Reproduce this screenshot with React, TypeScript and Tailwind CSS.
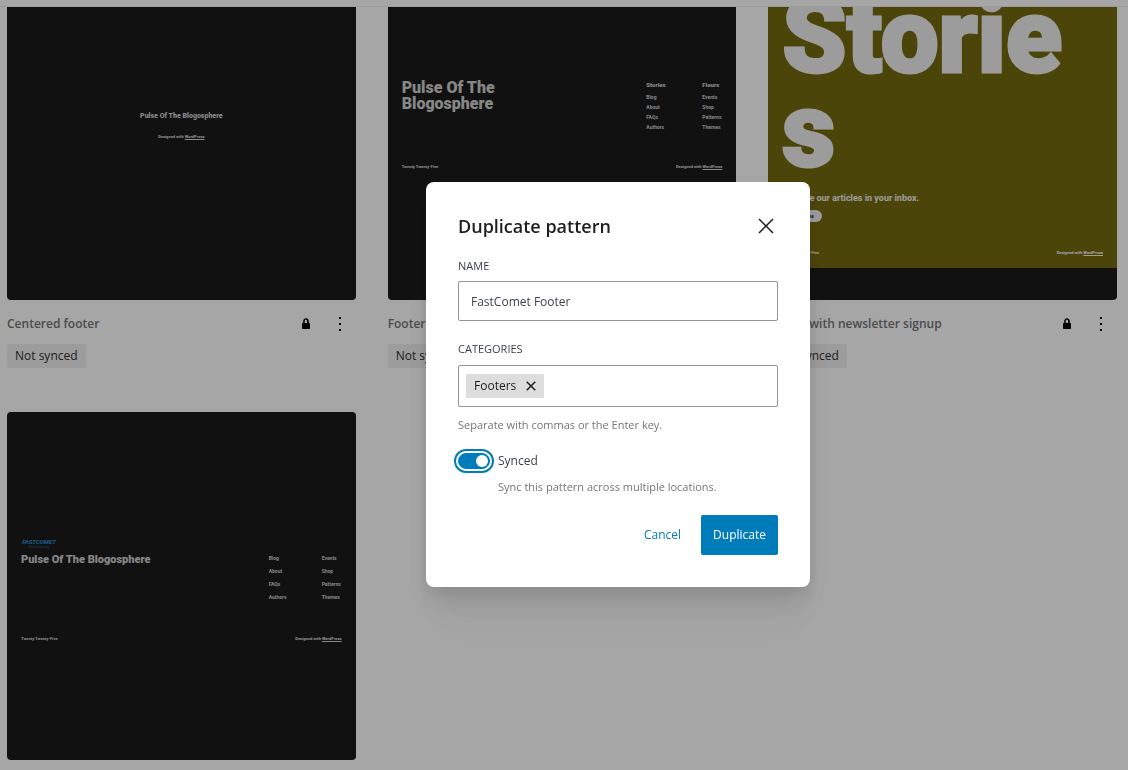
import { useState, type ReactNode } from "react";

const LINKS_LEFT = ["Blog", "About", "FAQs", "Authors"];
const LINKS_RIGHT = ["Events", "Shop", "Patterns", "Themes"];

const ICONS = {
  close:
    "m13.06 12 6.47-6.47-1.06-1.06L12 10.94 5.53 4.47 4.47 5.53 10.94 12l-6.47 6.47 1.06 1.06L12 13.06l6.47 6.47 1.06-1.06L13.06 12Z",
  closeSmall:
    "M12 13.06l3.712 3.713 1.061-1.06L13.061 12l3.712-3.712-1.06-1.06L12 10.938 8.288 7.227l-1.061 1.06L10.939 12l-3.712 3.712 1.06 1.061L12 13.061z",
  more: "M13 19h-2v-2h2v2zm0-6h-2v-2h2v2zm0-6h-2V5h2v2z",
  lock: "M15 11h-.2V9c0-1.5-1.2-2.8-2.8-2.8S9.2 7.5 9.2 9v2H9c-.6 0-1 .4-1 1v4c0 .6.4 1 1 1h6c.6 0 1-.4 1-1v-4c0-.6-.4-1-1-1zm-1.8 0h-2.5V9c0-.7.6-1.2 1.2-1.2s1.2.6 1.2 1.2v2z",
};

function Icon({ d }: { d: string }) {
  return (
    <svg
      viewBox="0 0 24 24"
      width="24"
      height="24"
      fill="currentColor"
      aria-hidden="true"
      className="shrink-0"
    >
      <path d={d} />
    </svg>
  );
}

function DesignedWith() {
  return (
    <span>
      Designed with <span className="underline">WordPress</span>
    </span>
  );
}

function Credits({ className }: { className: string }) {
  return (
    <div className={`flex justify-between text-[4px] leading-[6px] font-black ${className}`}>
      <span>Twenty Twenty-Five</span>
      <DesignedWith />
    </div>
  );
}

function LinkColumn({
  title,
  links,
  className,
}: {
  title?: string;
  links: string[];
  className: string;
}) {
  return (
    <div>
      {title && <p className="mb-0.5 text-[6px] leading-[10px] font-black">{title}</p>}
      <ul className={`text-[5px] font-bold ${className}`}>
        {links.map((link) => (
          <li key={link}>{link}</li>
        ))}
      </ul>
    </div>
  );
}

function CenteredPreview() {
  return (
    <div className="pt-0.5 text-center">
      <p className="text-[7px] leading-[10px] font-black">Pulse Of The Blogosphere</p>
      <p className="mt-3 text-[4px] leading-[8px] font-black">
        <DesignedWith />
      </p>
    </div>
  );
}

function ColumnsPreview() {
  return (
    <div className="px-3.5">
      <div className="flex justify-between">
        <p className="text-base leading-4 font-black">
          Pulse Of The
          <br />
          Blogosphere
        </p>
        <div className="grid grid-cols-[56px_20px]">
          <LinkColumn title="Stories" links={LINKS_LEFT} className="leading-[10px]" />
          <LinkColumn title="Fleurs" links={LINKS_RIGHT} className="leading-[10px]" />
        </div>
      </div>
      <Credits className="mt-8" />
    </div>
  );
}

function NewsletterPreview() {
  return (
    <div className="bg-[#766a0f] px-3.5 pt-2 pb-3 text-[#f0f0f0]">
      <p className="text-[103px] leading-[94px] font-black break-all [-webkit-text-stroke:3px]">
        Stories
      </p>
      <p className="mt-3.5 text-[9px] leading-3 font-bold">Receive our articles in your inbox.</p>
      <div className="mt-1.5 flex h-3 w-10 items-center justify-center rounded-full bg-[#f0f0f0] text-[5px] font-bold text-[#1b1b1b]">
        Subscribe
      </div>
      <Credits className="mt-7" />
    </div>
  );
}

function FastCometPreview() {
  return (
    <div className="px-3.5 pt-2">
      <div className="w-9 text-center text-[#2f87c4] italic">
        <p className="text-[6px] leading-[6px] font-black">FASTCOMET</p>
        <p className="text-[3px] leading-[5px] opacity-60">Website hosting</p>
      </div>
      <div className="mt-0.5 flex justify-between">
        <p className="text-[11px] leading-4 font-black">Pulse Of The Blogosphere</p>
        <div className="grid grid-cols-[53px_20px]">
          <LinkColumn links={LINKS_LEFT} className="leading-[13px]" />
          <LinkColumn links={LINKS_RIGHT} className="leading-[13px]" />
        </div>
      </div>
      <Credits className="mt-8" />
    </div>
  );
}

function PatternCard({ title, children }: { title?: string; children: ReactNode }) {
  return (
    <article>
      <div className="flex aspect-square flex-col justify-center overflow-hidden rounded bg-[#1b1b1b] font-['Roboto',sans-serif] text-[#cfcfcf]">
        {children}
      </div>
      {title && (
        <>
          <div className="mt-2 flex h-8 items-center gap-1.5">
            <h3 className="flex-1 truncate text-xs font-semibold text-[#757575]">{title}</h3>
            <Icon d={ICONS.lock} />
            <button
              type="button"
              aria-label={`Actions for ${title}`}
              className="flex size-8 items-center justify-center"
            >
              <Icon d={ICONS.more} />
            </button>
          </div>
          <span className="mt-1 mb-3 inline-flex h-6 items-center rounded-xs bg-[#f0f0f0] px-2 text-xs text-[#2f2f2f]">
            Not synced
          </span>
        </>
      )}
    </article>
  );
}

function DuplicateModal() {
  const [name, setName] = useState("FastComet Footer");
  const [categories, setCategories] = useState(["Footers"]);
  const [synced, setSynced] = useState(true);

  return (
    <div
      role="dialog"
      aria-modal="true"
      aria-labelledby="modal-title"
      className="w-96 rounded-lg bg-white p-8 text-xs text-[#3c434a] shadow-[0_5px_15px_rgba(0,0,0,0.08),0_15px_27px_rgba(0,0,0,0.07),0_30px_36px_rgba(0,0,0,0.04),0_50px_43px_rgba(0,0,0,0.02)]"
    >
      <header className="flex h-6 items-center justify-between">
        <h1 id="modal-title" className="text-lg font-semibold text-[#1e1e1e]">
          Duplicate pattern
        </h1>
        <button type="button" aria-label="Close" className="text-[#1e1e1e]">
          <Icon d={ICONS.close} />
        </button>
      </header>

      <form onSubmit={(event) => event.preventDefault()}>
        <label
          htmlFor="pattern-name"
          className="mt-5 block text-[11px] leading-4 font-medium uppercase"
        >
          Name
        </label>
        <input
          id="pattern-name"
          value={name}
          onChange={(event) => setName(event.target.value)}
          className="mt-[7px] block h-10 w-full rounded-xs border border-[#949494] px-3 pt-0.5"
        />

        <label
          htmlFor="pattern-categories"
          className="mt-5 block text-[11px] leading-4 font-medium uppercase"
        >
          Categories
        </label>
        <div className="mt-2 flex h-[42px] items-center gap-1 rounded-xs border border-[#949494] px-[7px]">
          {categories.map((category) => (
            <span
              key={category}
              className="flex h-6 items-center rounded-[1px] bg-[#dddddd] pr-px pl-2 text-[#1e1e1e]"
            >
              {category}
              <button
                type="button"
                aria-label={`Remove ${category}`}
                onClick={() => setCategories(categories.filter((c) => c !== category))}
                className="ml-[3px]"
              >
                <Icon d={ICONS.closeSmall} />
              </button>
            </span>
          ))}
          <input id="pattern-categories" className="min-w-0 flex-1 outline-none" />
        </div>
        <p className="mt-2.5 text-[11px] leading-4 text-[#757575]">
          Separate with commas or the Enter key.
        </p>

        <div className="mt-5 flex h-4 items-center gap-2">
          <input
            id="pattern-synced"
            type="checkbox"
            checked={synced}
            onChange={(event) => setSynced(event.target.checked)}
            className="flex h-4 w-8 appearance-none items-center rounded-full border border-[#949494] px-px outline-2 outline-offset-2 outline-[#007cba] before:size-3 before:rounded-full before:bg-[#949494] checked:justify-end checked:border-[#007cba] checked:bg-[#007cba] checked:before:bg-white"
          />
          <label htmlFor="pattern-synced">Synced</label>
        </div>
        <p className="mt-2.5 pl-10 text-[11px] leading-4 text-[#757575]">
          Sync this pattern across multiple locations.
        </p>

        <div className="mt-5 flex justify-end gap-2">
          <button type="button" className="h-10 px-3 text-[#007cba]">
            Cancel
          </button>
          <button
            type="submit"
            className="h-10 rounded-xs bg-[#007cba] px-3 font-medium text-white"
          >
            Duplicate
          </button>
        </div>
      </form>
    </div>
  );
}

export default function App() {
  return (
    <div className="flex h-screen flex-col overflow-hidden bg-white font-['Open_Sans',sans-serif] text-black">
      <div className="h-[7px] shrink-0 border-b border-[#f0f0f0]" />
      <main className="min-h-0 flex-1 overflow-hidden">
        <div className="-mt-14 grid grid-cols-3 gap-8 pr-[11px] pl-[7px]">
          <PatternCard title="Centered footer">
            <CenteredPreview />
          </PatternCard>
          <PatternCard title="Footer with columns">
            <ColumnsPreview />
          </PatternCard>
          <PatternCard title="Footer with newsletter signup">
            <NewsletterPreview />
          </PatternCard>
          <PatternCard>
            <FastCometPreview />
          </PatternCard>
        </div>
      </main>

      <div className="fixed inset-0 flex items-center justify-center bg-black/35 pb-0.5 pl-[108px]">
        <DuplicateModal />
      </div>
    </div>
  );
}
